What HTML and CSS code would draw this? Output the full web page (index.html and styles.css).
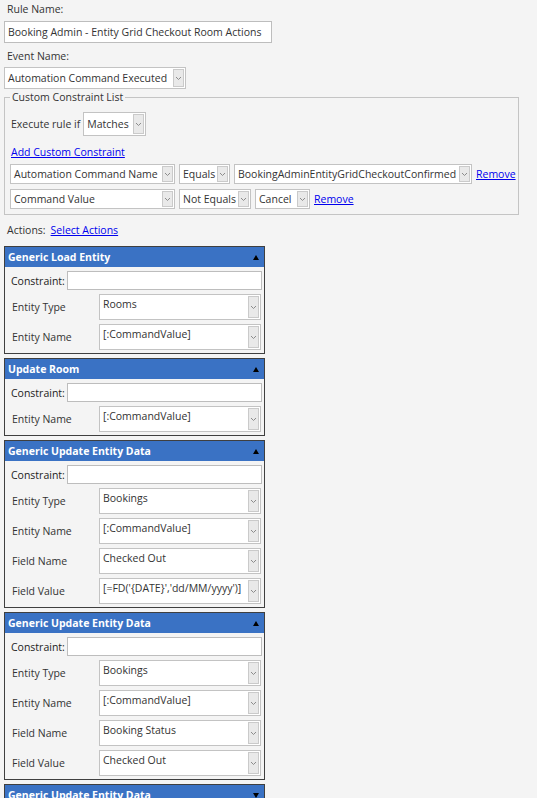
FILE: index.html
```html
<!DOCTYPE html>
<html>
<head>
<meta charset="utf-8">
<title>Rule Editor</title>
<link rel="stylesheet" href="styles.css">
</head>
<body>
<div class="page">
  <div class="lbl lbl-rule">Rule Name:</div>
  <div class="tb tb-rule">Booking Admin - Entity Grid Checkout Room Actions</div>
  <div class="lbl lbl-event">Event Name:</div>
  <div class="sel sel-event"><span class="txt">Automation Command Executed</span><span class="arr"><svg width="7" height="5" viewBox="0 0 7 5"><path d="M1 1l2.5 2.5L6 1" fill="none" stroke="#8c8c8c" stroke-width="1"/></svg></span></div>

  <fieldset class="ccl">
    <legend>Custom Constraint List</legend>
    <div class="exec-row">
      <span class="exec-lbl">Execute rule if</span>
      <div class="sel sel-match"><span class="txt">Matches</span><span class="arr"><svg width="7" height="5" viewBox="0 0 7 5"><path d="M1 1l2.5 2.5L6 1" fill="none" stroke="#8c8c8c" stroke-width="1"/></svg></span></div>
    </div>
    <div class="add-row"><a class="link" href="#">Add Custom Constraint</a></div>
    <div class="crow">
      <div class="sel sel-sm w-field"><span class="txt">Automation Command Name</span><span class="arr"><svg width="7" height="5" viewBox="0 0 7 5"><path d="M1 1l2.5 2.5L6 1" fill="none" stroke="#8c8c8c" stroke-width="1"/></svg></span></div>
      <div class="sel sel-sm w-eq"><span class="txt">Equals</span><span class="arr"><svg width="7" height="5" viewBox="0 0 7 5"><path d="M1 1l2.5 2.5L6 1" fill="none" stroke="#8c8c8c" stroke-width="1"/></svg></span></div>
      <div class="sel sel-sm w-val"><span class="txt">BookingAdminEntityGridCheckoutConfirmed</span><span class="arr"><svg width="7" height="5" viewBox="0 0 7 5"><path d="M1 1l2.5 2.5L6 1" fill="none" stroke="#8c8c8c" stroke-width="1"/></svg></span></div>
      <a class="link" href="#">Remove</a>
    </div>
    <div class="crow">
      <div class="sel sel-sm w-field"><span class="txt">Command Value</span><span class="arr"><svg width="7" height="5" viewBox="0 0 7 5"><path d="M1 1l2.5 2.5L6 1" fill="none" stroke="#8c8c8c" stroke-width="1"/></svg></span></div>
      <div class="sel sel-sm w-neq"><span class="txt">Not Equals</span><span class="arr"><svg width="7" height="5" viewBox="0 0 7 5"><path d="M1 1l2.5 2.5L6 1" fill="none" stroke="#8c8c8c" stroke-width="1"/></svg></span></div>
      <div class="sel sel-sm w-cancel"><span class="txt">Cancel</span><span class="arr"><svg width="7" height="5" viewBox="0 0 7 5"><path d="M1 1l2.5 2.5L6 1" fill="none" stroke="#8c8c8c" stroke-width="1"/></svg></span></div>
      <a class="link" href="#">Remove</a>
    </div>
  </fieldset>

  <div class="actions-row"><span>Actions:</span><a class="link" href="#">Select Actions</a></div>

  <div class="panel">
    <div class="phead"><span>Generic Load Entity</span><span class="tri-up"></span></div>
    <div class="pbody">
      <div class="con-row"><span class="con-lbl">Constraint:</span><div class="tb tb-con"></div></div>
      <div class="frow"><span class="flbl">Entity Type</span><div class="sel sel-tall"><span class="txt">Rooms</span><span class="arr"><svg width="7" height="5" viewBox="0 0 7 5"><path d="M1 1l2.5 2.5L6 1" fill="none" stroke="#8c8c8c" stroke-width="1"/></svg></span></div></div>
      <div class="frow"><span class="flbl">Entity Name</span><div class="sel sel-tall"><span class="txt">[:CommandValue]</span><span class="arr"><svg width="7" height="5" viewBox="0 0 7 5"><path d="M1 1l2.5 2.5L6 1" fill="none" stroke="#8c8c8c" stroke-width="1"/></svg></span></div></div>
    </div>
  </div>

  <div class="panel">
    <div class="phead"><span>Update Room</span><span class="tri-up"></span></div>
    <div class="pbody">
      <div class="con-row"><span class="con-lbl">Constraint:</span><div class="tb tb-con"></div></div>
      <div class="frow"><span class="flbl">Entity Name</span><div class="sel sel-tall"><span class="txt">[:CommandValue]</span><span class="arr"><svg width="7" height="5" viewBox="0 0 7 5"><path d="M1 1l2.5 2.5L6 1" fill="none" stroke="#8c8c8c" stroke-width="1"/></svg></span></div></div>
    </div>
  </div>

  <div class="panel">
    <div class="phead"><span>Generic Update Entity Data</span><span class="tri-up"></span></div>
    <div class="pbody">
      <div class="con-row"><span class="con-lbl">Constraint:</span><div class="tb tb-con"></div></div>
      <div class="frow"><span class="flbl">Entity Type</span><div class="sel sel-tall"><span class="txt">Bookings</span><span class="arr"><svg width="7" height="5" viewBox="0 0 7 5"><path d="M1 1l2.5 2.5L6 1" fill="none" stroke="#8c8c8c" stroke-width="1"/></svg></span></div></div>
      <div class="frow"><span class="flbl">Entity Name</span><div class="sel sel-tall"><span class="txt">[:CommandValue]</span><span class="arr"><svg width="7" height="5" viewBox="0 0 7 5"><path d="M1 1l2.5 2.5L6 1" fill="none" stroke="#8c8c8c" stroke-width="1"/></svg></span></div></div>
      <div class="frow"><span class="flbl">Field Name</span><div class="sel sel-tall"><span class="txt">Checked Out</span><span class="arr"><svg width="7" height="5" viewBox="0 0 7 5"><path d="M1 1l2.5 2.5L6 1" fill="none" stroke="#8c8c8c" stroke-width="1"/></svg></span></div></div>
      <div class="frow"><span class="flbl">Field Value</span><div class="sel sel-tall"><span class="txt">[=FD('{DATE}','dd/MM/yyyy')]</span><span class="arr"><svg width="7" height="5" viewBox="0 0 7 5"><path d="M1 1l2.5 2.5L6 1" fill="none" stroke="#8c8c8c" stroke-width="1"/></svg></span></div></div>
    </div>
  </div>

  <div class="panel">
    <div class="phead"><span>Generic Update Entity Data</span><span class="tri-up"></span></div>
    <div class="pbody">
      <div class="con-row"><span class="con-lbl">Constraint:</span><div class="tb tb-con"></div></div>
      <div class="frow"><span class="flbl">Entity Type</span><div class="sel sel-tall"><span class="txt">Bookings</span><span class="arr"><svg width="7" height="5" viewBox="0 0 7 5"><path d="M1 1l2.5 2.5L6 1" fill="none" stroke="#8c8c8c" stroke-width="1"/></svg></span></div></div>
      <div class="frow"><span class="flbl">Entity Name</span><div class="sel sel-tall"><span class="txt">[:CommandValue]</span><span class="arr"><svg width="7" height="5" viewBox="0 0 7 5"><path d="M1 1l2.5 2.5L6 1" fill="none" stroke="#8c8c8c" stroke-width="1"/></svg></span></div></div>
      <div class="frow"><span class="flbl">Field Name</span><div class="sel sel-tall"><span class="txt">Booking Status</span><span class="arr"><svg width="7" height="5" viewBox="0 0 7 5"><path d="M1 1l2.5 2.5L6 1" fill="none" stroke="#8c8c8c" stroke-width="1"/></svg></span></div></div>
      <div class="frow"><span class="flbl">Field Value</span><div class="sel sel-tall"><span class="txt">Checked Out</span><span class="arr"><svg width="7" height="5" viewBox="0 0 7 5"><path d="M1 1l2.5 2.5L6 1" fill="none" stroke="#8c8c8c" stroke-width="1"/></svg></span></div></div>
    </div>
  </div>

  <div class="panel">
    <div class="phead"><span>Generic Update Entity Data</span><span class="tri-down"></span></div>
  </div>
</div>
</body>
</html>
```
FILE: styles.css
```css
html, body {
  margin: 0;
  padding: 0;
  background: #f4f4f4;
}
body {
  font-family: "Open Sans", "Noto Sans", "DejaVu Sans", sans-serif;
  font-size: 10.5px;
  color: #333333;
  overflow: hidden;
}
.page {
  padding: 2px 0 0 4px;
}
.lbl {
  padding-left: 3px;
  line-height: 15px;
  height: 15px;
}
.lbl-event {
  margin-top: 6px;
}
.tb {
  box-sizing: border-box;
  background: #ffffff;
  border: 1px solid #bdbdbd;
  white-space: nowrap;
  overflow: hidden;
}
.tb-rule {
  margin-top: 4px;
  width: 268px;
  height: 22px;
  line-height: 20px;
  padding-left: 3px;
}
.sel {
  box-sizing: border-box;
  display: flex;
  background: #ffffff;
  border: 1px solid #c3c3c3;
  white-space: nowrap;
}
.sel .txt {
  flex: 1;
  overflow: hidden;
  padding-left: 3px;
}
.sel .arr {
  box-sizing: border-box;
  width: 11px;
  margin: 1px;
  background: #e9e9e9;
  border: 1px solid #cacaca;
  display: flex;
  align-items: center;
  justify-content: center;
  flex: none;
}
.sel-event {
  margin-top: 3px;
  width: 182px;
  height: 22px;
  line-height: 20px;
}
.ccl {
  margin: 1px 0 0 0;
  width: 515px;
  box-sizing: border-box;
  border: 1px solid #c4c4c4;
  padding: 8px 0 5px 5px;
}
.ccl legend {
  padding: 0 2px;
  margin-left: 0;
  line-height: 14px;
}
.exec-row {
  display: flex;
  align-items: center;
  gap: 3px;
}
.exec-lbl {
  padding-left: 1px;
}
.sel-match {
  width: 63px;
  height: 24px;
  line-height: 22px;
}
.add-row {
  margin-top: 8px;
  padding-left: 1px;
  line-height: 16px;
}
.link {
  color: #0000ee;
  text-decoration: underline;
}
.crow {
  display: flex;
  align-items: center;
  gap: 4px;
  margin-top: 5px;
}
.add-row + .crow {
  margin-top: 4px;
}
.sel-sm {
  height: 20px;
  line-height: 18px;
}
.w-field { width: 165px; }
.w-eq { width: 51px; }
.w-val { width: 238px; }
.w-neq { width: 72px; }
.w-cancel { width: 55px; }

.actions-row {
  margin-top: 8px;
  padding-left: 3px;
  line-height: 15px;
  display: flex;
  gap: 5px;
}
.panel {
  margin-top: 8px;
  width: 261px;
  box-sizing: border-box;
  border: 1px solid #3f3f3f;
}
.panel + .panel {
  margin-top: 4px;
}
.phead {
  height: 20px;
  background: #3a72c4;
  color: #ffffff;
  font-weight: bold;
  font-size: 10.5px;
  line-height: 20px;
  padding: 0 5px 0 3px;
  display: flex;
  align-items: center;
  justify-content: space-between;
}
.tri-up {
  width: 0;
  height: 0;
  border-left: 3.5px solid transparent;
  border-right: 3.5px solid transparent;
  border-bottom: 5px solid #000000;
}
.tri-down {
  width: 0;
  height: 0;
  border-left: 3.5px solid transparent;
  border-right: 3.5px solid transparent;
  border-top: 5px solid #000000;
}
.pbody {
  padding: 4px 2px 3px 5px;
}
.con-row {
  display: flex;
  align-items: center;
  gap: 2px;
  margin-bottom: 4px;
}
.con-lbl {
  padding-left: 1px;
  color: #222222;
}
.tb-con {
  flex: 1;
  height: 19px;
}
.frow {
  display: flex;
  align-items: center;
  margin-top: 4px;
}
.con-row + .frow {
  margin-top: 3px;
}
.flbl {
  width: 89px;
  padding-left: 2px;
  box-sizing: border-box;
  color: #333333;
}
.sel-tall {
  width: 162px;
  height: 26px;
  line-height: 17px;
}
.sel-tall .txt {
  padding-top: 1px;
}
```
